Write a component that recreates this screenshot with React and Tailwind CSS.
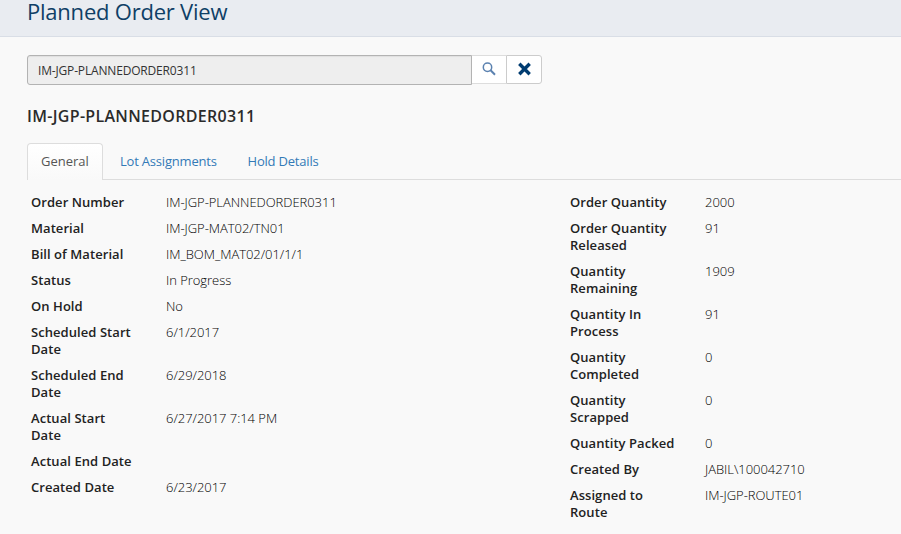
const leftRows = [
  ['Order Number', 'IM-JGP-PLANNEDORDER0311'],
  ['Material', 'IM-JGP-MAT02/TN01'],
  ['Bill of Material', 'IM_BOM_MAT02/01/1/1'],
  ['Status', 'In Progress'],
  ['On Hold', 'No'],
  ['Scheduled Start Date', '6/1/2017'],
  ['Scheduled End Date', '6/29/2018'],
  ['Actual Start Date', '6/27/2017 7:14 PM'],
  ['Actual End Date', ''],
  ['Created Date', '6/23/2017'],
];

const rightRows = [
  ['Order Quantity', '2000'],
  ['Order Quantity Released', '91'],
  ['Quantity Remaining', '1909'],
  ['Quantity In Process', '91'],
  ['Quantity Completed', '0'],
  ['Quantity Scrapped', '0'],
  ['Quantity Packed', '0'],
  ['Created By', 'JABIL\\100042710'],
  ['Assigned to Route', 'IM-JGP-ROUTE01'],
];

function Details({ rows }) {
  return (
    <dl className="flex w-[539px] shrink-0 flex-col gap-[9px] text-[13px] leading-[17px]">
      {rows.map(([label, value]) => (
        <div key={label} className="flex">
          <dt className="w-[135px] shrink-0 pr-[29px] font-semibold tracking-[0.06px] text-[#222]">{label}</dt>
          <dd className="font-light tracking-[-0.04px] text-black">{value}</dd>
        </div>
      ))}
    </dl>
  );
}

export default function App() {
  return (
    <div className="h-[534px] w-full overflow-hidden bg-[#f9f9f9] font-['Open_Sans',sans-serif] text-[#2b2b2b]">
      <header className="flex h-[37px] items-start border-b border-[#d9dee6] bg-[#e9ecf1] pl-[27px]">
        <h1 className="text-[22px] leading-[22px] font-normal tracking-[-0.22px] text-[#0f3f66]">Planned Order View</h1>
      </header>

      <div className="flex items-start pt-[18px] pl-[27px]">
        <div className="flex h-[30px] w-[445px] items-center rounded-l-[3px] border border-[#b3b3b3] bg-[#eee] pt-px pl-[10px] text-[12px] font-normal tracking-[-0.17px] text-[#333] shadow-[inset_0_1px_1px_rgba(0,0,0,0.06)]">
          IM-JGP-PLANNEDORDER0311
        </div>
        <button className="flex h-[29px] w-[34px] items-center justify-center border-y border-[#ddd] bg-white pb-[2px]">
          <svg width="14" height="14" viewBox="0 0 14 14" fill="none" stroke="#5b82b0">
            <circle cx="5.5" cy="5.2" r="4.2" strokeWidth="1.5" />
            <path d="M8.6 8.3L13 12.7" strokeWidth="2" />
          </svg>
        </button>
        <button className="flex h-[29px] w-[36px] items-center justify-center rounded-r-[3px] border border-[#ccc] bg-white pb-[2px]">
          <svg width="14" height="14" viewBox="0 0 14 14" fill="none" stroke="#003c71" strokeWidth="3.4">
            <path d="M2.3 1.8L12.7 12.2M12.7 1.8L2.3 12.2" />
          </svg>
        </button>
      </div>

      <h2 className="mt-[20px] pl-[27px] text-[16px] leading-[22px] font-semibold tracking-[0.31px]">IM-JGP-PLANNEDORDER0311</h2>

      <nav className="mt-[16px] flex h-[37px] text-[13px] leading-[17px]">
        <div className="w-[27px]" />
        <div className="w-[76px] rounded-t-[4px] border border-b-0 border-[#ddd] bg-linear-to-b from-white to-[#f9f9f9] pt-[9px] pl-[13px] font-medium text-[#555]">General</div>
        <div className="flex flex-1 border-b border-[#ddd] pt-[10px] pl-[17px] tracking-[-0.2px] text-[#337ab7]">
          <a className="w-[127.5px]">Lot Assignments</a>
          <a>Hold Details</a>
        </div>
      </nav>

      <div className="flex pt-[14px] pl-[31px]">
        <Details rows={leftRows} />
        <Details rows={rightRows} />
      </div>
    </div>
  );
}
